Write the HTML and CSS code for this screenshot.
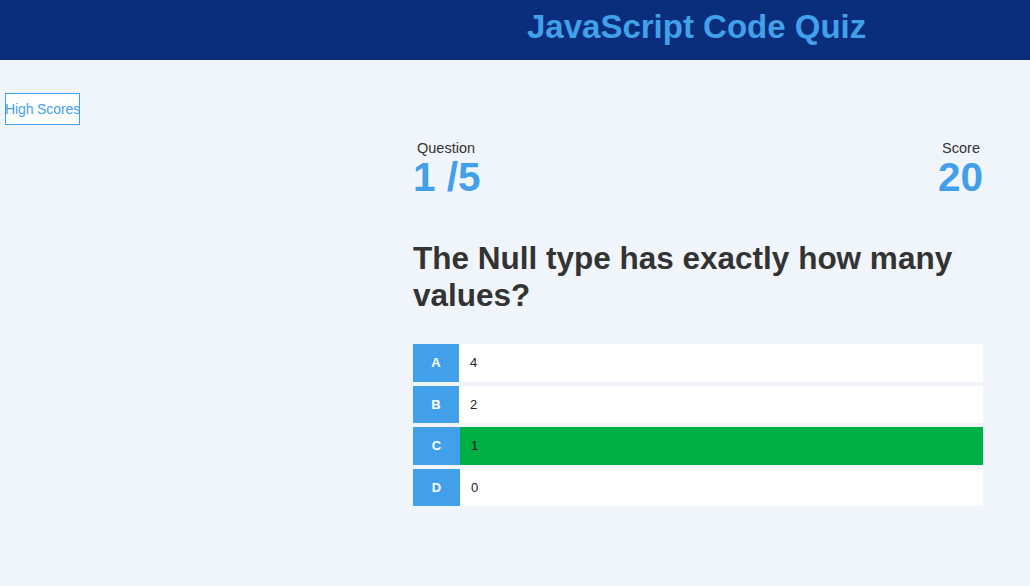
FILE: index.html
```html
<!DOCTYPE html>
<html>
<head>
<meta charset="utf-8">
<link rel="stylesheet" href="styles.css">
</head>
<body>
<header class="topbar">
  <h1 class="title">JavaScript Code Quiz</h1>
</header>
<div class="side">
  <a class="hs-btn" href="#">High Scores</a>
</div>
<main class="quiz">
  <div class="hud">
    <div class="hud-item">
      <div class="hud-label">Question</div>
      <div class="hud-value">1 /5</div>
    </div>
    <div class="hud-item right">
      <div class="hud-label">Score</div>
      <div class="hud-value">20</div>
    </div>
  </div>
  <h2 class="question">The Null type has exactly how many values?</h2>
  <div class="choices">
    <div class="choice"><span class="letter">A</span><span class="text">4</span></div>
    <div class="choice"><span class="letter">B</span><span class="text">2</span></div>
    <div class="choice correct"><span class="letter wide">C</span><span class="text">1</span></div>
    <div class="choice"><span class="letter wide">D</span><span class="text">0</span></div>
  </div>
</main>
</body>
</html>
```
FILE: styles.css
```css
html, body {
  margin: 0;
  padding: 0;
}
body {
  background: #f0f5fc;
  font-family: "Liberation Sans", Arial, sans-serif;
  color: #333;
  width: 1030px;
  height: 586px;
  overflow: hidden;
}
.topbar {
  background: #0b2e7c;
  height: 60px;
  display: flex;
  align-items: center;
  padding-left: 527px;
  box-sizing: border-box;
}
.title {
  margin: 0;
  font-size: 33px;
  font-weight: bold;
  color: #42a0ea;
  line-height: 1;
  padding-bottom: 8px;
}
.side {
  padding: 33px 0 0 5px;
  height: 32px;
}
.hs-btn {
  display: inline-flex;
  align-items: center;
  box-sizing: border-box;
  height: 32px;
  width: 75px;
  border: 1px solid #42a0ea;
  background: #fff;
  color: #42a0ea;
  font-size: 14px;
  text-decoration: none;
  justify-content: center;
  letter-spacing: -0.1px;
  white-space: nowrap;
}
.quiz {
  width: 570px;
  margin-left: 413px;
  padding-top: 15px;
}
.hud {
  display: flex;
  justify-content: space-between;
}
.hud-item {
  display: flex;
  flex-direction: column;
  align-items: flex-start;
}
.hud-item.right {
  align-items: flex-end;
}
.hud-label {
  font-size: 14.5px;
  line-height: 16px;
  padding-left: 4px;
}
.hud-item.right .hud-label {
  padding-left: 0;
  padding-right: 3px;
}
.hud-value {
  font-size: 40.5px;
  font-weight: bold;
  color: #42a0ea;
  line-height: 42px;
}
.question {
  margin: 42px 0 0 0;
  font-size: 31.5px;
  line-height: 37px;
  font-weight: bold;
  color: #333;
}
.choices {
  margin-top: 30px;
  display: flex;
  flex-direction: column;
  gap: 4px;
}
.choice {
  display: flex;
  height: 37.5px;
  background: #fff;
  font-size: 13px;
}
.choice.correct {
  background: #00b044;
}
.letter {
  width: 46px;
  background: #42a0ea;
  color: #fff;
  display: flex;
  align-items: center;
  justify-content: center;
  font-size: 13px;
  font-weight: bold;
}
.letter.wide {
  width: 47px;
}
.text {
  display: flex;
  align-items: center;
  padding-left: 11px;
  color: #222;
}
```
